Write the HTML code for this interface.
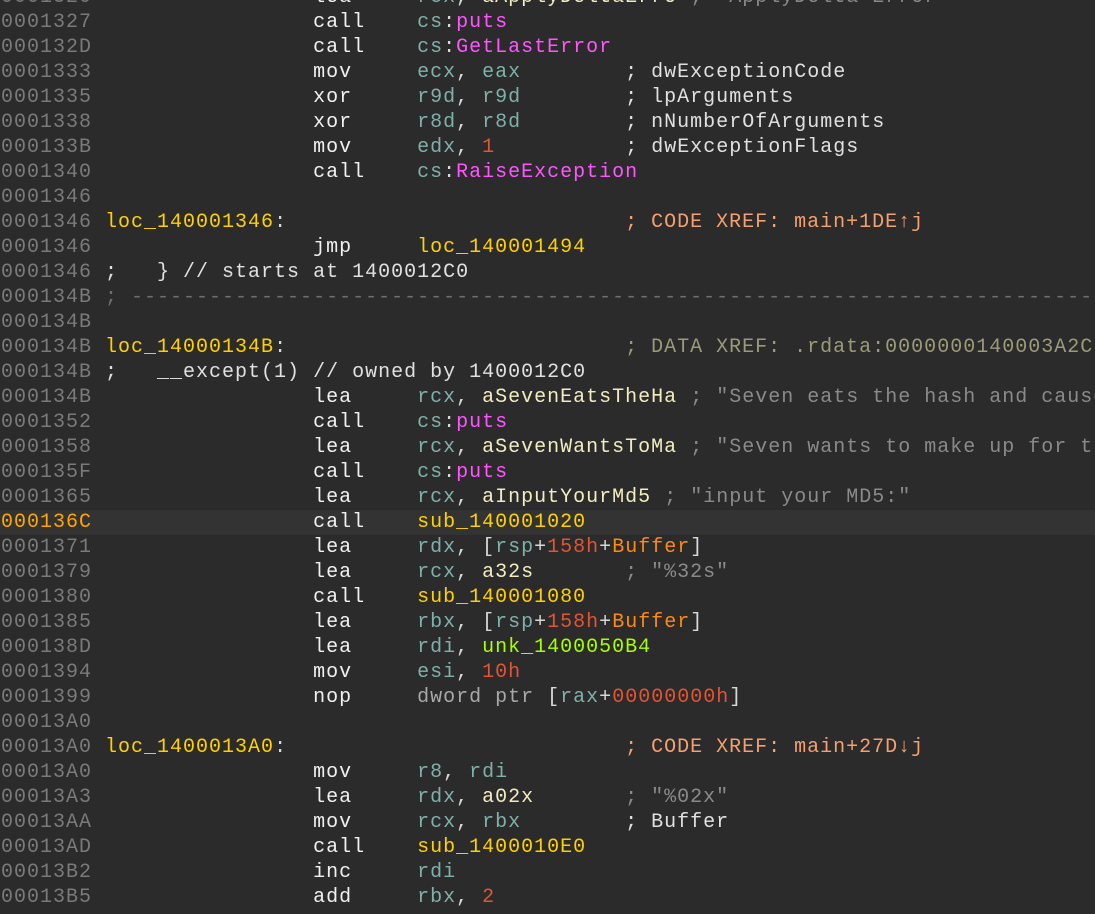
<!DOCTYPE html>
<html><head><meta charset="utf-8"><style>
html,body{margin:0;padding:0;background:#2b2b2b;width:1095px;height:914px;overflow:hidden}
#c{position:absolute;left:1px;top:-15px;font-family:"Liberation Mono","DejaVu Sans Mono",monospace;font-size:20px;letter-spacing:1px;line-height:25px;color:#e8e8e8}
.l{height:25px;width:1200px;white-space:pre}
.hl{background:#333333;margin-left:-1px;padding-left:1px}
.a{color:#7a7a7a}.ha{color:#ffa500}
.m{color:#f0f0f0}.r{color:#7fb0aa}.p{color:#d8d8d8}.n{color:#f2ecc0}
.lb{color:#ffd000}.num{color:#e05533}.b{color:#ff8a10}.imp{color:#ff55ff}
.c{color:#e0e0e0}.sc{color:#8a8a8a}.cx{color:#f4a070}.dx{color:#9c9a78}
.u{color:#a8ff00}.g{color:#a8a8a8}.sep{color:#6e6e6e}
</style></head><body><div id="c"><div class="l"><span class="a">0001320</span>                 <span class="m">lea</span>     <span class="r">rcx</span><span class="p">,</span> <span class="n">aApplyDeltaErro</span> <span class="sc">; "ApplyDelta Error"</span></div><div class="l"><span class="a">0001327</span>                 <span class="m">call</span>    <span class="r">cs</span><span class="p">:</span><span class="imp">puts</span></div><div class="l"><span class="a">000132D</span>                 <span class="m">call</span>    <span class="r">cs</span><span class="p">:</span><span class="imp">GetLastError</span></div><div class="l"><span class="a">0001333</span>                 <span class="m">mov</span>     <span class="r">ecx</span><span class="p">,</span> <span class="r">eax</span>        <span class="c">; dwExceptionCode</span></div><div class="l"><span class="a">0001335</span>                 <span class="m">xor</span>     <span class="r">r9d</span><span class="p">,</span> <span class="r">r9d</span>        <span class="c">; lpArguments</span></div><div class="l"><span class="a">0001338</span>                 <span class="m">xor</span>     <span class="r">r8d</span><span class="p">,</span> <span class="r">r8d</span>        <span class="c">; nNumberOfArguments</span></div><div class="l"><span class="a">000133B</span>                 <span class="m">mov</span>     <span class="r">edx</span><span class="p">,</span> <span class="num">1</span>          <span class="c">; dwExceptionFlags</span></div><div class="l"><span class="a">0001340</span>                 <span class="m">call</span>    <span class="r">cs</span><span class="p">:</span><span class="imp">RaiseException</span></div><div class="l"><span class="a">0001346</span></div><div class="l"><span class="a">0001346</span> <span class="lb">loc_140001346</span><span class="p">:</span>                          <span class="cx">; CODE XREF: main+1DE↑j</span></div><div class="l"><span class="a">0001346</span>                 <span class="m">jmp</span>     <span class="lb">loc_140001494</span></div><div class="l"><span class="a">0001346</span> <span class="c">;   } // starts at 1400012C0</span></div><div class="l"><span class="a">000134B</span> <span class="sep">; ---------------------------------------------------------------------------</span></div><div class="l"><span class="a">000134B</span></div><div class="l"><span class="a">000134B</span> <span class="lb">loc_14000134B</span><span class="p">:</span>                          <span class="dx">; DATA XREF: .rdata:0000000140003A2C↓o</span></div><div class="l"><span class="a">000134B</span> <span class="c">;   __except(1) // owned by 1400012C0</span></div><div class="l"><span class="a">000134B</span>                 <span class="m">lea</span>     <span class="r">rcx</span><span class="p">,</span> <span class="n">aSevenEatsTheHa</span> <span class="sc">; "Seven eats the hash and causes"</span></div><div class="l"><span class="a">0001352</span>                 <span class="m">call</span>    <span class="r">cs</span><span class="p">:</span><span class="imp">puts</span></div><div class="l"><span class="a">0001358</span>                 <span class="m">lea</span>     <span class="r">rcx</span><span class="p">,</span> <span class="n">aSevenWantsToMa</span> <span class="sc">; "Seven wants to make up for this"</span></div><div class="l"><span class="a">000135F</span>                 <span class="m">call</span>    <span class="r">cs</span><span class="p">:</span><span class="imp">puts</span></div><div class="l"><span class="a">0001365</span>                 <span class="m">lea</span>     <span class="r">rcx</span><span class="p">,</span> <span class="n">aInputYourMd5</span> <span class="sc">; "input your MD5:"</span></div><div class="l hl"><span class="ha">000136C</span>                 <span class="m">call</span>    <span class="lb">sub_140001020</span></div><div class="l"><span class="a">0001371</span>                 <span class="m">lea</span>     <span class="r">rdx</span><span class="p">, [</span><span class="r">rsp</span><span class="p">+</span><span class="num">158h</span><span class="p">+</span><span class="b">Buffer</span><span class="p">]</span></div><div class="l"><span class="a">0001379</span>                 <span class="m">lea</span>     <span class="r">rcx</span><span class="p">,</span> <span class="n">a32s</span>       <span class="sc">; "%32s"</span></div><div class="l"><span class="a">0001380</span>                 <span class="m">call</span>    <span class="lb">sub_140001080</span></div><div class="l"><span class="a">0001385</span>                 <span class="m">lea</span>     <span class="r">rbx</span><span class="p">, [</span><span class="r">rsp</span><span class="p">+</span><span class="num">158h</span><span class="p">+</span><span class="b">Buffer</span><span class="p">]</span></div><div class="l"><span class="a">000138D</span>                 <span class="m">lea</span>     <span class="r">rdi</span><span class="p">,</span> <span class="u">unk_1400050B4</span></div><div class="l"><span class="a">0001394</span>                 <span class="m">mov</span>     <span class="r">esi</span><span class="p">,</span> <span class="num">10h</span></div><div class="l"><span class="a">0001399</span>                 <span class="m">nop</span>     <span class="g">dword ptr</span> <span class="p">[</span><span class="r">rax</span><span class="p">+</span><span class="num">00000000h</span><span class="p">]</span></div><div class="l"><span class="a">00013A0</span></div><div class="l"><span class="a">00013A0</span> <span class="lb">loc_1400013A0</span><span class="p">:</span>                          <span class="cx">; CODE XREF: main+27D↓j</span></div><div class="l"><span class="a">00013A0</span>                 <span class="m">mov</span>     <span class="r">r8</span><span class="p">,</span> <span class="r">rdi</span></div><div class="l"><span class="a">00013A3</span>                 <span class="m">lea</span>     <span class="r">rdx</span><span class="p">,</span> <span class="n">a02x</span>       <span class="sc">; "%02x"</span></div><div class="l"><span class="a">00013AA</span>                 <span class="m">mov</span>     <span class="r">rcx</span><span class="p">,</span> <span class="r">rbx</span>        <span class="c">; Buffer</span></div><div class="l"><span class="a">00013AD</span>                 <span class="m">call</span>    <span class="lb">sub_1400010E0</span></div><div class="l"><span class="a">00013B2</span>                 <span class="m">inc</span>     <span class="r">rdi</span></div><div class="l"><span class="a">00013B5</span>                 <span class="m">add</span>     <span class="r">rbx</span><span class="p">,</span> <span class="num">2</span></div></div></body></html>
